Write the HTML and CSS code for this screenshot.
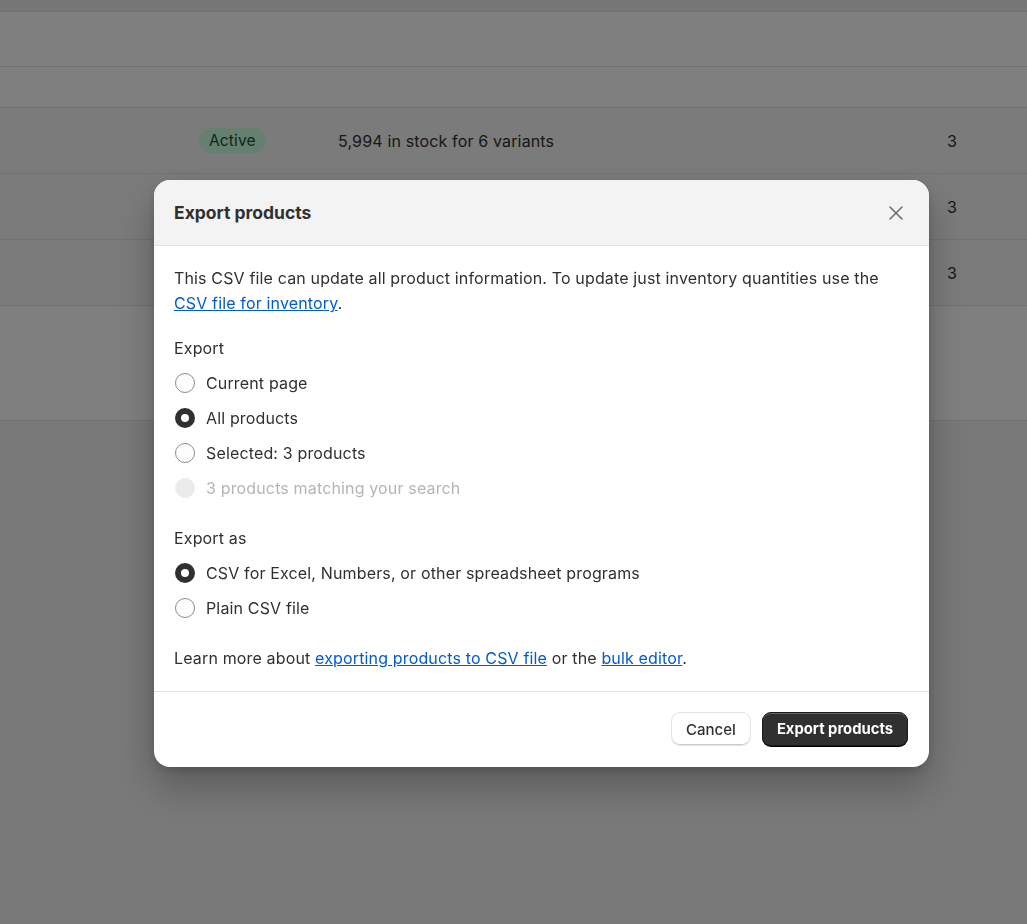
FILE: index.html
```html
<!DOCTYPE html>
<html>
	<head>
		<meta charset="utf-8">
		<link rel="stylesheet" href="styles.css">
	</head>
	<body>
		<div class="page">
			<div class="topbar"></div>
			<div class="row rowHead"></div>
			<div class="row rowSub"></div>

			<div class="row rowItem">
				<div></div>
				<div><span class="badge">Active</span></div>
				<div>5,994 in stock for 6 variants</div>
				<div>3</div>
			</div>
			<div class="row rowItem">
				<div></div>
				<div></div>
				<div></div>
				<div>3</div>
			</div>
			<div class="row rowItem">
				<div></div>
				<div></div>
				<div></div>
				<div>3</div>
			</div>

			<div class="tableFoot"></div>
		</div>

		<div class="overlay">
			<div class="modal">
				<div class="modalHeader">
					<h2>Export products</h2>
					<button class="close" aria-label="Close">
						<svg width="20" height="20" viewBox="0 0 20 20">
							<path d="M4 4 L16 16 M16 4 L4 16" stroke="#6b6b6b" stroke-width="1.5" stroke-linecap="round" fill="none"/>
						</svg>
					</button>
				</div>

				<div class="modalBody">
					<p class="intro">This CSV file can update all product information. To update just inventory quantities use the <a href="#">CSV file for inventory</a>.</p>

					<div class="group">
						<div class="groupLabel">Export</div>
						<label class="option"><span class="radio"></span>Current page</label>
						<label class="option"><span class="radio checked"></span>All products</label>
						<label class="option"><span class="radio"></span>Selected: 3 products</label>
						<label class="option disabled"><span class="radio"></span>3 products matching your search</label>
					</div>

					<div class="group">
						<div class="groupLabel">Export as</div>
						<label class="option"><span class="radio checked"></span>CSV for Excel, Numbers, or other spreadsheet programs</label>
						<label class="option"><span class="radio"></span>Plain CSV file</label>
					</div>

					<p class="learn">Learn more about <a href="#">exporting products to CSV file</a> or the <a href="#">bulk editor</a>.</p>
				</div>

				<div class="modalFooter">
					<button class="btn btnSecondary">Cancel</button>
					<button class="btn btnPrimary">Export products</button>
				</div>
			</div>
		</div>
	</body>
</html>
```

FILE: styles.css
```css
body {
	margin: 0;
	font-family: Inter, "Noto Sans", sans-serif;
	font-size: 16px;
	letter-spacing: 0.15px;
	color: #303030;
	background-color: #f2f2f2;
}

.page {
	width: 100%;
}

.topbar {
	height: 12px;
	background-color: #ececec;
	border-bottom: 1px solid #e3e3e3;
	box-sizing: border-box;
}

.row {
	box-sizing: border-box;
	background-color: #ffffff;
	border-bottom: 1px solid #e3e3e3;
}
.rowHead {
	height: 55px;
}
.rowSub {
	height: 41px;
}
.rowItem {
	height: 66px;
	background-color: #f6f6f6;
	display: grid;
	grid-template-columns: 199px 139px 1fr 80px;
	align-items: center;
}
.rowItem:last-of-type {
	height: 65px;
}

.badge {
	display: inline-block;
	padding: 3px 10px;
	border-radius: 13px;
	background-color: #cdfee1;
	color: #0c5132;
	font-size: 15.5px;
	line-height: 19px;
}

.tableFoot {
	height: 115px;
	box-sizing: border-box;
	background-color: #ffffff;
	border-bottom: 1px solid #e3e3e3;
}

.overlay {
	position: fixed;
	top: 0;
	left: 0;
	right: 0;
	bottom: 0;
	background-color: rgba(0, 0, 0, 0.5);
	display: flex;
	align-items: flex-start;
	padding: 180px 0 0 154px;
}

.modal {
	width: 775px;
	background-color: #ffffff;
	border-radius: 16px;
	overflow: hidden;
	box-shadow: 0 20px 40px rgba(0, 0, 0, 0.25), 0 4px 10px rgba(0, 0, 0, 0.15);
}

.modalHeader {
	height: 66px;
	box-sizing: border-box;
	background-color: #f3f3f3;
	border-bottom: 1px solid #e3e3e3;
	display: flex;
	align-items: center;
	justify-content: space-between;
	padding: 0 23px 0 20px;
}
.modalHeader h2 {
	margin: 0;
	font-size: 17.5px;
	font-weight: 650;
	letter-spacing: 0;
	color: #303030;
}
.close {
	border: none;
	background: none;
	padding: 0;
	width: 20px;
	height: 20px;
	cursor: pointer;
}

.modalBody {
	padding: 20px 20px 20px 20px;
	border-bottom: 1px solid #e3e3e3;
}
.modalBody p {
	margin: 0;
	line-height: 25px;
}
.modalBody a {
	color: #005bd3;
	text-decoration: underline;
}

.group {
	margin-top: 15px;
}
.group + .group {
	margin-top: 16px;
}
.groupLabel {
	height: 35px;
	line-height: 35px;
	margin-bottom: -1px;
}
.option {
	display: flex;
	align-items: center;
	height: 35px;
}
.option.disabled {
	color: #b5b5b5;
}

.radio {
	width: 20px;
	height: 20px;
	box-sizing: border-box;
	border-radius: 50%;
	border: 1px solid #8a8a8a;
	background-color: #fdfdfd;
	margin: 0 11px 0 1px;
	flex-shrink: 0;
}
.radio.checked {
	border: 6px solid #303030;
	background-color: #ffffff;
}
.disabled .radio {
	border-color: #ebebeb;
	background-color: #ebebeb;
}

.modalBody .learn {
	margin-top: 21px;
}

.modalFooter {
	height: 75px;
	box-sizing: border-box;
	display: flex;
	align-items: center;
	justify-content: flex-end;
	gap: 11px;
	padding: 0 21px 1px 20px;
}
.btn {
	height: 34px;
	border-radius: 9px;
	font-family: Inter, "Noto Sans", sans-serif;
	padding: 0 14px;
	cursor: pointer;
}
.btnSecondary {
	background-color: #ffffff;
	color: #303030;
	font-size: 15px;
	font-weight: 500;
	border: 1px solid #e3e3e3;
	box-shadow: inset 0 -1px 0 #cccccc;
}
.btnPrimary {
	background-color: #303030;
	color: #ffffff;
	font-size: 14.8px;
	font-weight: 650;
	border: 1px solid #1a1a1a;
	box-shadow: inset 0 1px 0 rgba(255, 255, 255, 0.25), 0 1px 0 #000000;
}
```
